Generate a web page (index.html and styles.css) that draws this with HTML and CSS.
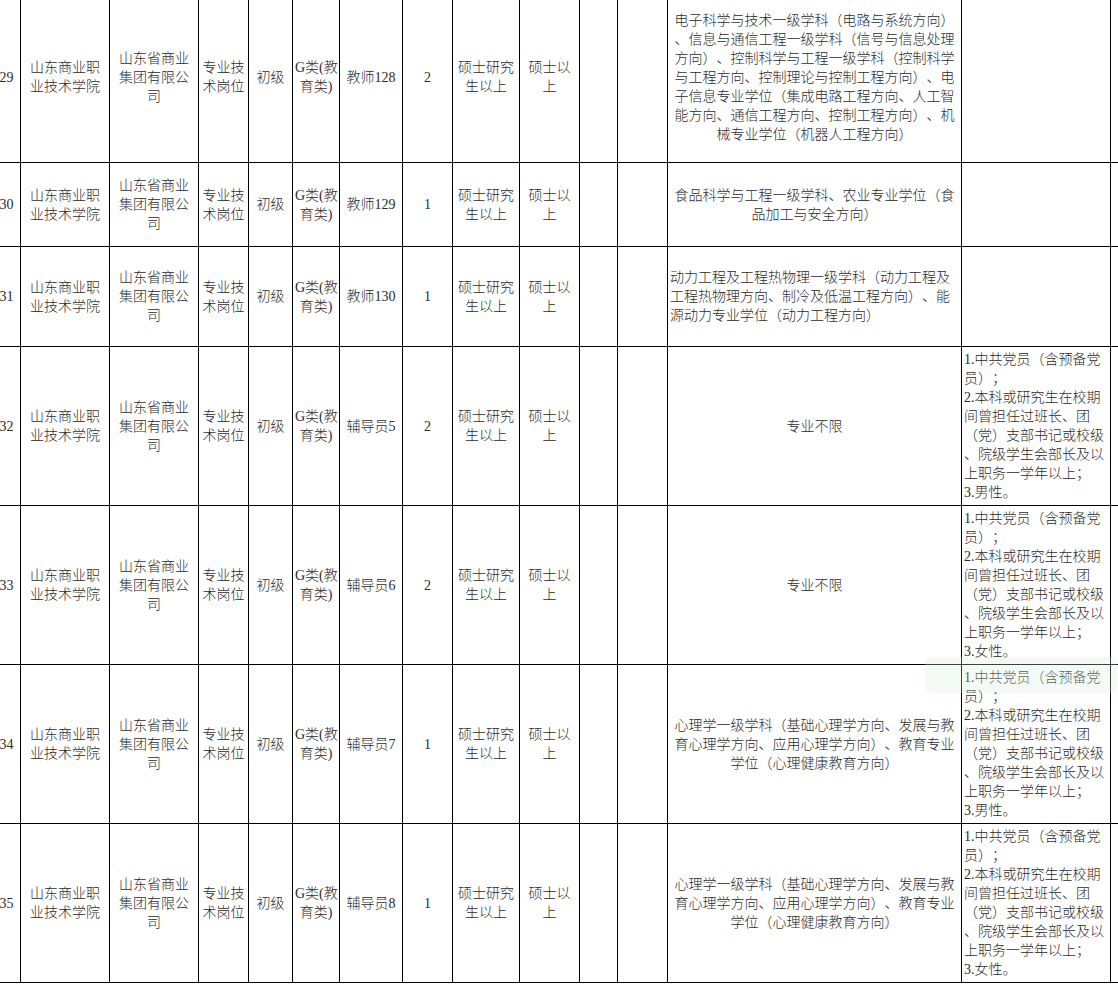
FILE: index.html
```html
<!DOCTYPE html>
<html lang="zh-CN">
<head>
<meta charset="utf-8">
<title>岗位表</title>
<link rel="stylesheet" href="styles.css">
</head>
<body>
<div class="page">
<table class="jobs">
  <colgroup>
    <col class="c-no"><col class="c-unit"><col class="c-org"><col class="c-type"><col class="c-lvl"><col class="c-cat"><col class="c-name"><col class="c-num"><col class="c-edu"><col class="c-deg"><col class="c-e1"><col class="c-e2"><col class="c-major"><col class="c-note"><col class="c-end">
  </colgroup>
  <tbody>
    <tr class="r-29">
      <td>29</td>
      <td>山东商业职<br>业技术学院</td>
      <td>山东省商业<br>集团有限公<br>司</td>
      <td>专业技<br>术岗位</td>
      <td>初级</td>
      <td>G类(教<br>育类)</td>
      <td>教师128</td>
      <td>2</td>
      <td>硕士研究<br>生以上</td>
      <td>硕士以<br>上</td>
      <td></td>
      <td></td>
      <td class="major">电子科学与技术一级学科（电路与系统方向）<br>、信息与通信工程一级学科（信号与信息处理<br>方向）、控制科学与工程一级学科（控制科学<br>与工程方向、控制理论与控制工程方向）、电<br>子信息专业学位（集成电路工程方向、人工智<br>能方向、通信工程方向、控制工程方向）、机<br>械专业学位（机器人工程方向）</td>
      <td class="note"></td>
      <td></td>
    </tr>
    <tr class="r-30">
      <td>30</td>
      <td>山东商业职<br>业技术学院</td>
      <td>山东省商业<br>集团有限公<br>司</td>
      <td>专业技<br>术岗位</td>
      <td>初级</td>
      <td>G类(教<br>育类)</td>
      <td>教师129</td>
      <td>1</td>
      <td>硕士研究<br>生以上</td>
      <td>硕士以<br>上</td>
      <td></td>
      <td></td>
      <td class="major">食品科学与工程一级学科、农业专业学位（食<br>品加工与安全方向）</td>
      <td class="note"></td>
      <td></td>
    </tr>
    <tr class="r-31">
      <td>31</td>
      <td>山东商业职<br>业技术学院</td>
      <td>山东省商业<br>集团有限公<br>司</td>
      <td>专业技<br>术岗位</td>
      <td>初级</td>
      <td>G类(教<br>育类)</td>
      <td>教师130</td>
      <td>1</td>
      <td>硕士研究<br>生以上</td>
      <td>硕士以<br>上</td>
      <td></td>
      <td></td>
      <td class="major major-left">动力工程及工程热物理一级学科（动力工程及<br>工程热物理方向、制冷及低温工程方向）、能<br>源动力专业学位（动力工程方向）</td>
      <td class="note"></td>
      <td></td>
    </tr>
    <tr class="r-big">
      <td>32</td>
      <td>山东商业职<br>业技术学院</td>
      <td>山东省商业<br>集团有限公<br>司</td>
      <td>专业技<br>术岗位</td>
      <td>初级</td>
      <td>G类(教<br>育类)</td>
      <td>辅导员5</td>
      <td>2</td>
      <td>硕士研究<br>生以上</td>
      <td>硕士以<br>上</td>
      <td></td>
      <td></td>
      <td class="major">专业不限</td>
      <td class="note">1.中共党员（含预备党<br>员）；<br>2.本科或研究生在校期<br>间曾担任过班长、团<br>（党）支部书记或校级<br>、院级学生会部长及以<br>上职务一学年以上；<br>3.男性。</td>
      <td></td>
    </tr>
    <tr class="r-big">
      <td>33</td>
      <td>山东商业职<br>业技术学院</td>
      <td>山东省商业<br>集团有限公<br>司</td>
      <td>专业技<br>术岗位</td>
      <td>初级</td>
      <td>G类(教<br>育类)</td>
      <td>辅导员6</td>
      <td>2</td>
      <td>硕士研究<br>生以上</td>
      <td>硕士以<br>上</td>
      <td></td>
      <td></td>
      <td class="major">专业不限</td>
      <td class="note">1.中共党员（含预备党<br>员）；<br>2.本科或研究生在校期<br>间曾担任过班长、团<br>（党）支部书记或校级<br>、院级学生会部长及以<br>上职务一学年以上；<br>3.女性。</td>
      <td></td>
    </tr>
    <tr class="r-big">
      <td>34</td>
      <td>山东商业职<br>业技术学院</td>
      <td>山东省商业<br>集团有限公<br>司</td>
      <td>专业技<br>术岗位</td>
      <td>初级</td>
      <td>G类(教<br>育类)</td>
      <td>辅导员7</td>
      <td>1</td>
      <td>硕士研究<br>生以上</td>
      <td>硕士以<br>上</td>
      <td></td>
      <td></td>
      <td class="major">心理学一级学科（基础心理学方向、发展与教<br>育心理学方向、应用心理学方向）、教育专业<br>学位（心理健康教育方向）</td>
      <td class="note">1.中共党员（含预备党<br>员）；<br>2.本科或研究生在校期<br>间曾担任过班长、团<br>（党）支部书记或校级<br>、院级学生会部长及以<br>上职务一学年以上；<br>3.男性。</td>
      <td></td>
    </tr>
    <tr class="r-big">
      <td>35</td>
      <td>山东商业职<br>业技术学院</td>
      <td>山东省商业<br>集团有限公<br>司</td>
      <td>专业技<br>术岗位</td>
      <td>初级</td>
      <td>G类(教<br>育类)</td>
      <td>辅导员8</td>
      <td>1</td>
      <td>硕士研究<br>生以上</td>
      <td>硕士以<br>上</td>
      <td></td>
      <td></td>
      <td class="major">心理学一级学科（基础心理学方向、发展与教<br>育心理学方向、应用心理学方向）、教育专业<br>学位（心理健康教育方向）</td>
      <td class="note">1.中共党员（含预备党<br>员）；<br>2.本科或研究生在校期<br>间曾担任过班长、团<br>（党）支部书记或校级<br>、院级学生会部长及以<br>上职务一学年以上；<br>3.女性。</td>
      <td></td>
    </tr>
  </tbody>
</table>
<div class="toast"></div>
</div>
</body>
</html>
```

FILE: styles.css
```css
html, body {
  margin: 0;
  padding: 0;
  background: #ffffff;
  overflow: hidden;
}

.page {
  position: relative;
  width: 1118px;
  height: 984px;
  overflow: hidden;
}

.jobs {
  border-collapse: collapse;
  table-layout: fixed;
  width: 1178px;
  margin: -9px 0 0 -8px;
  font-family: "Liberation Serif", "Noto Sans CJK SC", serif;
  font-size: 14px;
  font-weight: 300;
  line-height: 19px;
  color: #2b2b2b;
  text-spacing-trim: space-all;
  font-kerning: none;
}

.jobs td {
  border: 1px solid #000;
  padding: 0 2px;
  text-align: center;
  vertical-align: middle;
  white-space: nowrap;
}

.c-no { width: 28px; }
.c-unit { width: 89px; }
.c-org { width: 89px; }
.c-type { width: 50px; }
.c-lvl { width: 44px; }
.c-cat { width: 47px; }
.c-name { width: 63px; }
.c-num { width: 50px; }
.c-edu { width: 67px; }
.c-deg { width: 60px; }
.c-e1 { width: 38px; }
.c-e2 { width: 50px; }
.c-major { width: 294px; }
.c-note { width: 149px; }
.c-end { width: 60px; }

.r-29 { height: 171px; }
.r-30 { height: 84px; }
.r-31 { height: 100px; }
.r-big { height: 159px; }

.jobs td.major-left { text-align: left; }

.jobs td.note { text-align: left; }

.toast {
  position: absolute;
  left: 925px;
  top: 657px;
  width: 192px;
  height: 36px;
  border-radius: 6px;
  background: rgba(214, 240, 218, 0.28);
}
```
